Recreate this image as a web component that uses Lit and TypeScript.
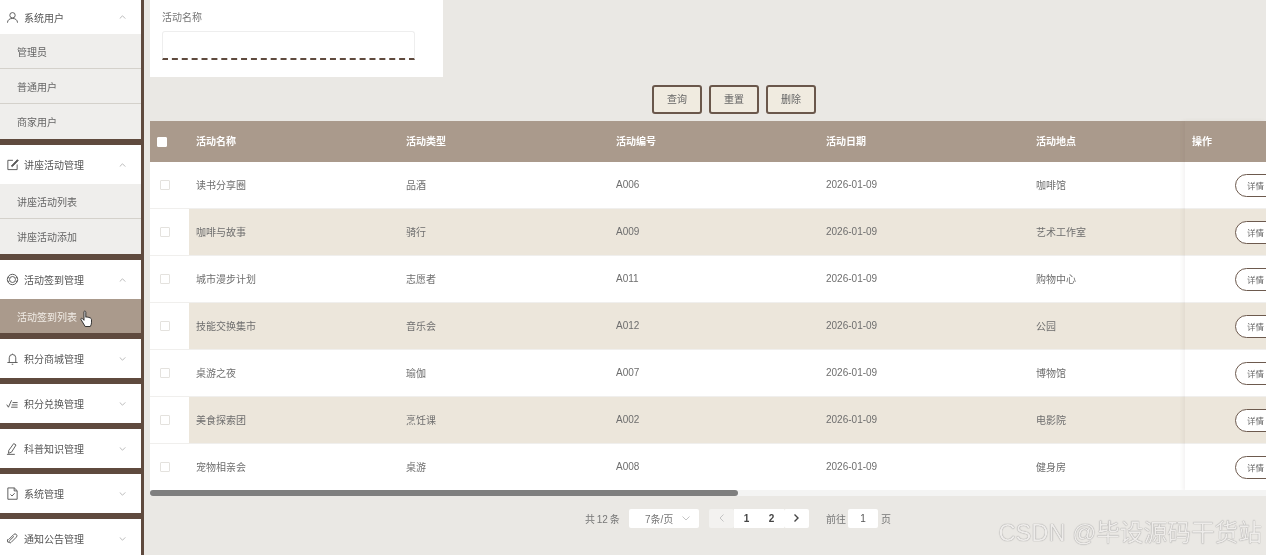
import { LitElement, html, css, svg } from 'lit';
import { customElement } from 'lit/decorators.js';

const icons: Record<string, unknown> = {
  user: svg`<circle cx="7" cy="4.600" r="2.900"/><path d="M1.600 12.600c0-3 2.400-4.600 5.400-4.600s5.400 1.600 5.400 4.600"/>`,
  edit: svg`<path d="M7.500 2.500H2v10h10V7"/><path d="M5.800 8.500 12.300 1.800l.9.9L6.700 9.300z" fill="currentColor"/>`,
  target: svg`<circle cx="7" cy="7" r="5.600"/><circle cx="7" cy="7" r="3.200"/><path d="M2 5h1.500M2 9h1.500M10.500 5H12M10.500 9H12"/>`,
  bell: svg`<path d="M1.500 11.300h11M3.500 11.300V6.200a3.500 3.500 0 0 1 7 0v5.100M6.200 13.200h1.600M7 1.800v.9"/>`,
  check: svg`<path d="M.8 8.200 2.600 11 6 3.500M7 6h5.500M6.200 8.500h6.300M5.500 11h7"/>`,
  pen: svg`<path d="M3 9 8.300 1.700l2.500 1.500-4.800 7.700-3.300 1.300z"/><path d="M1 13.300h8.500"/>`,
  doc: svg`<path d="M2 1h7l3 3v9.200H2z"/><path d="M8.800 1v3.200H12M4.800 8l1.700 1.700 2.800-3"/>`,
  clip: svg`<path d="M3 8 8.300 2.700a2 2 0 0 1 2.900 2.800L5.400 11.300a1.200 1.200 0 0 1-1.800-1.700l5-5"/><path d="M2.200 7.500a3 3 0 0 0 .5 4.200"/>`,
};

const menu = [
  { icon: 'user', label: '系统用户', open: true, first: true, items: ['管理员', '普通用户', '商家用户'] },
  { icon: 'edit', label: '讲座活动管理', open: true, items: ['讲座活动列表', '讲座活动添加'] },
  { icon: 'target', label: '活动签到管理', open: true, items: ['活动签到列表'], active: 0 },
  { icon: 'bell', label: '积分商城管理' },
  { icon: 'check', label: '积分兑换管理' },
  { icon: 'pen', label: '科普知识管理' },
  { icon: 'doc', label: '系统管理' },
  { icon: 'clip', label: '通知公告管理' },
];

const columns = ['活动名称', '活动类型', '活动编号', '活动日期', '活动地点'];

const rows = [
  ['读书分享圈', '品酒', 'A006', '2026-01-09', '咖啡馆'],
  ['咖啡与故事', '骑行', 'A009', '2026-01-09', '艺术工作室'],
  ['城市漫步计划', '志愿者', 'A011', '2026-01-09', '购物中心'],
  ['技能交换集市', '音乐会', 'A012', '2026-01-09', '公园'],
  ['桌游之夜', '瑜伽', 'A007', '2026-01-09', '博物馆'],
  ['美食探索团', '烹饪课', 'A002', '2026-01-09', '电影院'],
  ['宠物相亲会', '桌游', 'A008', '2026-01-09', '健身房'],
];

@customElement('app-root')
export class AppRoot extends LitElement {
  static styles = css`
    :host {
      display: flex;
      position: relative;
      width: 1266px;
      height: 555px;
      overflow: hidden;
      background: #eae8e4;
      font-family: 'Liberation Sans', 'Noto Sans CJK SC', sans-serif;
      font-size: 10px;
      color: #6e6e6e;
      filter: blur(0.35px);
    }
    .sidebar {
      width: 141px;
      flex: none;
      height: 555px;
      overflow: hidden;
      background: #5f4a3e;
      border-right: 3px solid #5f4a3e;
      display: flex;
      flex-direction: column;
      gap: 6px;
    }
    .group {
      flex: none;
    }
    .head {
      height: 39px;
      display: flex;
      align-items: center;
      padding: 0 15px 0 6px;
      gap: 5px;
      background: #fff;
      color: #555;
    }
    .head.first {
      height: 34px;
    }
    .head span {
      flex: 1;
    }
    .head svg.ic {
      width: 13px;
      height: 13px;
      fill: none;
      stroke: currentColor;
      stroke-width: 1;
    }
    .head svg.arrow {
      width: 7px;
      height: 4px;
      fill: none;
      stroke: #aaa;
      stroke-width: 1;
    }
    .sub {
      height: 35px;
      box-sizing: border-box;
      display: flex;
      align-items: center;
      padding-left: 17px;
      background: #efeeec;
      color: #666;
      border-bottom: 1px solid #d4d1cb;
    }
    .sub:last-child {
      border-bottom: none;
    }
    .sub.active {
      height: 34px;
      padding-top: 1px;
      background: #aa9a8c;
      color: #f1ece6;
    }
    .main {
      flex: 1;
      min-width: 0;
      padding-left: 6px;
      display: flex;
      flex-direction: column;
    }
    .search {
      width: 293px;
      height: 77px;
      box-sizing: border-box;
      background: #fff;
      padding: 11px 12px 0;
    }
    .search label {
      display: block;
      height: 20px;
      line-height: 13px;
      color: #777;
    }
    .search .input {
      width: 253px;
      height: 29px;
      box-sizing: border-box;
      border: 1px solid #eeeeee;
      border-bottom: 2px dashed #5f4a3e;
      border-radius: 3px 3px 0 0;
    }
    .actions {
      display: flex;
      justify-content: center;
      gap: 7px;
      margin-top: 8px;
      height: 29px;
      padding-left: 52px;
    }
    .actions button {
      width: 50px;
      height: 29px;
      padding: 0 0 2px;
      box-sizing: border-box;
      background: #f0ebe0;
      border: 2px solid #6a574b;
      border-radius: 3px;
      font: inherit;
      color: #666;
    }
    .table {
      margin-top: 7px;
      display: flex;
      height: 370px;
      flex: none;
    }
    .scroll {
      flex: 1;
      min-width: 0;
      overflow: hidden;
    }
    .tr {
      display: grid;
      grid-template-columns: 39px repeat(5, 210px);
      width: 1089px;
      height: 47px;
      align-items: center;
      box-sizing: border-box;
      background: #fff;
      border-bottom: 1px solid #f0efed;
    }
    .tr.head-row {
      height: 41px;
      background: #aa9a8c;
      color: #fff;
      font-weight: 700;
      border-bottom: none;
    }
    .tr.head-row .cell {
      padding-bottom: 2px;
    }
    .tr.even > .cell {
      background: #ece6db;
    }
    .cell {
      height: 100%;
      box-sizing: border-box;
      display: flex;
      align-items: center;
      padding: 0 0 1px 7px;
    }
    .check {
      justify-self: start;
      width: 10px;
      height: 10px;
      box-sizing: border-box;
      border: 1px solid #e4e2de;
      border-radius: 1px;
      background: #fff;
      margin-left: 10px;
    }
    .head-row .check {
      border-color: #fff;
      margin-left: 7px;
    }
    .fixed {
      width: 81px;
      flex: none;
      box-shadow: -2px 0 4px rgba(90, 75, 60, 0.07);
      position: relative;
    }
    .fixed .row {
      height: 47px;
      box-sizing: border-box;
      display: flex;
      align-items: center;
      background: #fff;
      border-bottom: 1px solid #f0efed;
      padding-left: 50px;
      overflow: hidden;
    }
    .fixed .row.even {
      background: #ece6db;
    }
    .fixed .row.title {
      height: 41px;
      background: #aa9a8c;
      color: #fff;
      font-weight: 700;
      padding: 0 0 2px 7px;
      border-bottom: none;
    }
    .detail {
      flex: none;
      width: 50px;
      height: 23px;
      padding: 0 0 0 11px;
      text-align: left;
      box-sizing: border-box;
      background: #fff;
      border: 1px solid #6d5a4e;
      border-radius: 12px;
      font: inherit;
      font-size: 8.500px;
      color: #666;
    }
    .bar {
      height: 6px;
      margin-top: -1px;
      background: #f4f4f3;
      flex: none;
      position: relative;
      z-index: 1;
    }
    .bar div {
      width: 588px;
      height: 6px;
      border-radius: 3px;
      background: #7f7f7f;
    }
    .pager {
      margin-top: 13px;
      display: flex;
      align-items: center;
      height: 19px;
      padding-left: 435px;
      color: #777;
    }
    .pager > * {
      box-sizing: border-box;
      padding-bottom: 1px;
    }
    .pager .total {
      width: 44px;
      word-spacing: -1px;
    }
    .select {
      width: 70px;
      height: 19px;
      background: #fff;
      border-radius: 2px;
      display: flex;
      align-items: center;
      padding: 0 9px 0 16px;
      justify-content: space-between;
      margin-right: 10px;
    }
    .select svg,
    .nav svg {
      fill: none;
      stroke: #c4c4c4;
      stroke-width: 1;
    }
    .select svg {
      width: 8px;
      height: 5px;
    }
    .nav {
      width: 25px;
      height: 19px;
      display: flex;
      align-items: center;
      justify-content: center;
      background: #fff;
      border-radius: 2px;
    }
    .nav.off {
      background: #f3f2f0;
    }
    .nav svg {
      width: 5px;
      height: 8px;
    }
    .nav.on svg {
      stroke: #444;
      stroke-width: 1.400;
    }
    .num {
      width: 25px;
      height: 19px;
      display: flex;
      align-items: center;
      justify-content: center;
      background: #fff;
      font-weight: 700;
      color: #444;
    }
    .goto {
      margin-left: 17px;
      width: 22px;
    }
    .jump {
      width: 30px;
      height: 19px;
      display: flex;
      align-items: center;
      justify-content: center;
      background: #fff;
      border-radius: 2px;
      margin-right: 3px;
      color: #555;
    }
    .mark {
      position: absolute;
      right: 4px;
      bottom: 7px;
      font-size: 23.700px;
      line-height: 30px;
      color: #eeecea;
      text-shadow: 0 0 1px #6e6e6e;
      white-space: nowrap;
    }
    .hand {
      position: absolute;
      left: 80px;
      top: 310px;
      width: 14px;
      height: 18px;
    }
  `;

  private arrow(open?: boolean) {
    return html`<svg class="arrow" viewBox="0 0 8 5">
      <path d=${open ? 'M.5 4.500 4 1l3.500 3.500' : 'M.5.5 4 4 7.500.5'} />
    </svg>`;
  }

  private renderGroup(g: (typeof menu)[number]) {
    return html`<div class="group">
      <div class="head ${g.first ? 'first' : ''}">
        <svg class="ic" viewBox="0 0 14 14">${icons[g.icon]}</svg>
        <span>${g.label}</span>
        ${this.arrow(g.open)}
      </div>
      ${(g.items ?? []).map(
        (item, i) =>
          html`<div class="sub ${g.active === i ? 'active' : ''}">${item}</div>`,
      )}
    </div>`;
  }

  render() {
    return html`
      <aside class="sidebar">${menu.map((g) => this.renderGroup(g))}</aside>
      <main class="main">
        <div class="search">
          <label>活动名称</label>
          <div class="input"></div>
        </div>
        <div class="actions">
          <button>查询</button>
          <button>重置</button>
          <button>删除</button>
        </div>
        <div class="table">
          <div class="scroll">
            <div class="tr head-row">
              <i class="check"></i>
              ${columns.map((c) => html`<div class="cell">${c}</div>`)}
            </div>
            ${rows.map(
              (r, i) => html`<div class="tr ${i % 2 ? 'even' : ''}">
                <i class="check"></i>
                ${r.map((c) => html`<div class="cell">${c}</div>`)}
              </div>`,
            )}
          </div>
          <div class="fixed">
            <div class="row title">操作</div>
            ${rows.map(
              (_, i) => html`<div class="row ${i % 2 ? 'even' : ''}">
                <button class="detail">详情</button>
              </div>`,
            )}
          </div>
        </div>
        <div class="bar"><div></div></div>
        <div class="pager">
          <span class="total">共 12 条</span>
          <div class="select">
            7条/页
            <svg viewBox="0 0 8 5"><path d="M.5.5 4 4 7.500.5" /></svg>
          </div>
          <div class="nav off">
            <svg viewBox="0 0 5 8"><path d="M4.500.5 1 4l3.500 3.500" /></svg>
          </div>
          <div class="num">1</div>
          <div class="num">2</div>
          <div class="nav on">
            <svg viewBox="0 0 5 8"><path d="M.5.5 4 4 .5 7.500" /></svg>
          </div>
          <span class="goto">前往</span>
          <div class="jump">1</div>
          <span>页</span>
        </div>
      </main>
      <svg class="hand" viewBox="0 0 14 18">
        <path
          d="M4 1.500c.8-.8 1.800-.3 1.800.7v5l1-.3 1 .3 1 .2 1.200.4c1 .4 1.500 1 1.500 2v3c0 1.500-.6 2.500-1.200 3.700H5.200L2.500 12 1 9.500c-.4-1 .7-1.700 1.500-.9L4 10.300z"
          fill="#fff"
          stroke="#222"
          stroke-width=".9"
          stroke-linejoin="round"
        />
      </svg>
      <div class="mark">CSDN @毕设源码干货站</div>
    `;
  }
}
